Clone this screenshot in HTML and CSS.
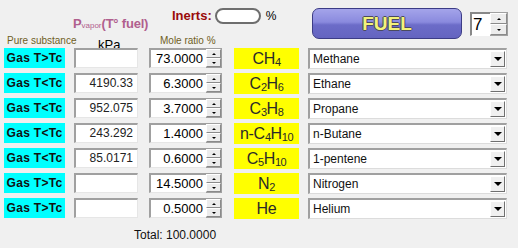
FILE: index.html
```html
<!DOCTYPE html>
<html>
<head>
<meta charset="utf-8">
<link rel="stylesheet" href="styles.css">
</head>
<body>
<div class="app">
  <div class="head">
    <div class="head-left">
      <div class="head-top">
        <div class="pvap">P<span class="pv-sub">vapor</span>(T° fuel)</div>
        <div class="inerts"><span class="inerts-lbl">Inerts:</span><span class="pill"></span><span class="pct">%</span></div>
      </div>
      <div class="head-bot">
        <span class="cap cap-pure">Pure substance</span>
        <span class="kpa">kPa</span>
        <span class="cap cap-mole">Mole ratio %</span>
      </div>
    </div>
    <div class="fuel">FUEL</div>
    <div class="count">
      <div class="count-val">7</div>
      <div class="spin-btns big"><span class="sb up"></span><span class="sb dn"></span></div>
    </div>
  </div>

  <div class="rows">
    <div class="sub">Gas T&gt;Tc</div>
    <div class="inp"></div>
    <div class="spin"><div class="spin-val">73.0000</div><div class="spin-btns"><span class="sb up"></span><span class="sb dn"></span></div></div>
    <div class="formula">CH<sub>4</sub></div>
    <div class="select"><span class="sel-txt">Methane</span><span class="sel-btn"><i></i></span></div>

    <div class="sub">Gas T&lt;Tc</div>
    <div class="inp">4190.33</div>
    <div class="spin"><div class="spin-val">6.3000</div><div class="spin-btns"><span class="sb up"></span><span class="sb dn"></span></div></div>
    <div class="formula">C<sub>2</sub>H<sub>6</sub></div>
    <div class="select"><span class="sel-txt">Ethane</span><span class="sel-btn"><i></i></span></div>

    <div class="sub">Gas T&lt;Tc</div>
    <div class="inp">952.075</div>
    <div class="spin"><div class="spin-val">3.7000</div><div class="spin-btns"><span class="sb up"></span><span class="sb dn"></span></div></div>
    <div class="formula">C<sub>3</sub>H<sub>8</sub></div>
    <div class="select"><span class="sel-txt">Propane</span><span class="sel-btn"><i></i></span></div>

    <div class="sub">Gas T&lt;Tc</div>
    <div class="inp">243.292</div>
    <div class="spin"><div class="spin-val">1.4000</div><div class="spin-btns"><span class="sb up"></span><span class="sb dn"></span></div></div>
    <div class="formula">n-C<sub>4</sub>H<sub>10</sub></div>
    <div class="select"><span class="sel-txt">n-Butane</span><span class="sel-btn"><i></i></span></div>

    <div class="sub">Gas T&lt;Tc</div>
    <div class="inp">85.0171</div>
    <div class="spin"><div class="spin-val">0.6000</div><div class="spin-btns"><span class="sb up"></span><span class="sb dn"></span></div></div>
    <div class="formula">C<sub>5</sub>H<sub>10</sub></div>
    <div class="select"><span class="sel-txt">1-pentene</span><span class="sel-btn"><i></i></span></div>

    <div class="sub">Gas T&gt;Tc</div>
    <div class="inp"></div>
    <div class="spin"><div class="spin-val">14.5000</div><div class="spin-btns"><span class="sb up"></span><span class="sb dn"></span></div></div>
    <div class="formula">N<sub>2</sub></div>
    <div class="select"><span class="sel-txt">Nitrogen</span><span class="sel-btn"><i></i></span></div>

    <div class="sub">Gas T&gt;Tc</div>
    <div class="inp"></div>
    <div class="spin"><div class="spin-val">0.5000</div><div class="spin-btns"><span class="sb up"></span><span class="sb dn"></span></div></div>
    <div class="formula">He</div>
    <div class="select"><span class="sel-txt">Helium</span><span class="sel-btn"><i></i></span></div>
  </div>

  <div class="total">Total: 100.0000</div>
</div>
</body>
</html>
```

FILE: styles.css
```css
* { box-sizing: border-box; }
html, body { margin: 0; padding: 0; }
body {
  background: #f0f0f0;
  font-family: "Liberation Sans", Arial, sans-serif;
  font-size: 12px;
  color: #000;
  width: 518px;
  height: 248px;
  overflow: hidden;
}
.app { width: 518px; }

/* header */
.head { display: flex; height: 48px; }
.head-left { width: 308px; display: flex; flex-direction: column; }
.head-top { display: flex; height: 33px; }
.pvap {
  margin-left: 73px;
  margin-top: 17px;
  width: 99px;
  font-size: 13px;
  font-weight: bold;
  color: #b0608e;
  line-height: 14px;
  white-space: nowrap;
  letter-spacing: -0.2px;
}
.pv-sub { font-size: 8px; font-weight: normal; letter-spacing: 0; }
.inerts { display: flex; align-items: center; margin-top: 8px; height: 15px; }
.inerts-lbl { font-size: 13px; font-weight: bold; color: #9a0a0a; line-height: 13px; }
.pill {
  width: 46px; height: 16px;
  margin-left: 3px;
  background: #fff;
  border: 2px solid #6e6e6e;
  border-radius: 8px;
}
.pct { margin-left: 5px; font-size: 12px; }
.head-bot { display: flex; align-items: flex-start; height: 15px; }
.cap { font-size: 10px; color: #6f5e1e; line-height: 10px; margin-top: 3px; }
.cap-pure { margin-left: 7px; width: 91px; }
.kpa { font-size: 13px; line-height: 13px; margin-top: 5px; width: 62px; }

.fuel {
  margin-left: 4px;
  margin-top: 8px;
  width: 150px;
  height: 31px;
  border: 1px solid #3c3c86;
  border-radius: 7px;
  background: linear-gradient(#a4a4ea 0%, #8a8ade 45%, #6c6cc8 55%, #6464c0 100%);
  color: #f2f27a;
  font-size: 19px;
  font-weight: bold;
  text-align: center;
  line-height: 29px;
  text-shadow: -1px 0 #4a4a60, 1px 0 #4a4a60, 0 -1px #4a4a60, 0 1px #4a4a60;
}
.count {
  display: flex;
  margin-left: 8px;
  margin-top: 12px;
  width: 38px;
  height: 24px;
}
.count-val {
  width: 20px; height: 24px;
  background: #fff;
  border-top: 2px solid #888;
  border-left: 2px solid #888;
  border-bottom: 1px solid #fff;
  font-size: 17px;
  line-height: 22px;
  padding-left: 1px;
}
.spin-btns { display: flex; flex-direction: column; width: 16px; background: #f0f0f0; border: 1px solid #a0a0a0; border-left: none; }
.spin-btns.big { width: 18px; }
.sb {
  flex: 1;
  position: relative;
  border: 1px solid #fff;
  border-right-color: #8a8a8a;
  border-bottom-color: #8a8a8a;
  background: #ececec;
}
.sb::after {
  content: "";
  position: absolute;
  left: 50%; top: 50%;
  margin-left: -2px;
  border-left: 2px solid transparent;
  border-right: 2px solid transparent;
}
.sb.up::after { margin-top: -1px; border-bottom: 2px solid #000; }
.sb.dn::after { margin-top: -1px; border-top: 2px solid #000; }

/* rows */
.rows {
  display: grid;
  grid-template-columns: 70px 75px 85px 74px 199px;
  grid-auto-rows: 20px;
  row-gap: 5px;
  padding-left: 4px;
}
.sub {
  width: 61px; height: 20px;
  background: #00ffff;
  font-weight: bold;
  font-size: 12px;
  line-height: 20px;
  text-align: center;
  letter-spacing: 0.3px;
  color: #111;
}
.inp {
  width: 64px; height: 20px;
  background: #fff;
  border-top: 2px solid #a0a0a0;
  border-left: 2px solid #a0a0a0;
  border-right: 1px solid #e6e6e6;
  border-bottom: 1px solid #e6e6e6;
  text-align: right;
  padding-right: 4px;
  font-size: 12px;
  line-height: 17px;
  color: #222;
}
.spin { display: flex; width: 73px; height: 20px; }
.spin-val {
  width: 57px; height: 20px;
  background: #fff;
  border-top: 2px solid #a0a0a0;
  border-left: 2px solid #a0a0a0;
  border-bottom: 1px solid #e6e6e6;
  text-align: right;
  padding-right: 3px;
  font-size: 13px;
  line-height: 18px;
}
.spin .spin-btns { height: 20px; }
.formula {
  width: 65px; height: 21px;
  background: #ffff00;
  font-size: 16px;
  line-height: 21px;
  text-align: center;
  color: #2a2a2a;
  white-space: nowrap;
  letter-spacing: -0.3px;
  overflow: hidden;
}
.formula sub { font-size: 11px; line-height: 0; vertical-align: -2px; letter-spacing: -0.5px; }
.select {
  display: flex;
  width: 199px; height: 21px;
  background: #fff;
  border-top: 2px solid #a0a0a0;
  border-left: 2px solid #a0a0a0;
  border-right: 1px solid #dcdcdc;
  border-bottom: 1px solid #dcdcdc;
}
.sel-txt { flex: 1; padding-left: 3px; font-size: 12px; line-height: 18px; color: #111; }
.sel-btn {
  width: 15px; height: 16px;
  margin: 1px 1px 0 0;
  background: #f0f0f0;
  border: 1px solid #fff;
  border-right-color: #707070;
  border-bottom-color: #707070;
  display: flex; align-items: center; justify-content: center;
}
.sel-btn i {
  display: block;
  border-left: 4px solid transparent;
  border-right: 4px solid transparent;
  border-top: 4px solid #000;
}

.total { margin-left: 134px; margin-top: 10px; font-size: 12px; color: #111; }
```
